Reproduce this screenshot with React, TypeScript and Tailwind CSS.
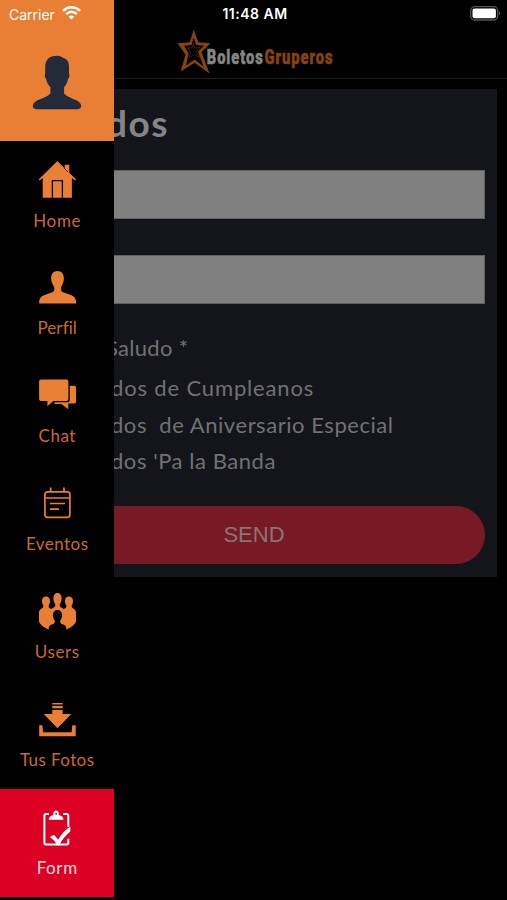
import type { ReactNode } from "react";

const HomeIcon = () => (
  <g>
    <path d="M19.3 0 26.7 7.2V3.7h4.6v8l6.8 6.8-1 1-3.2-2.4v19.6H4.7V17.1l-3 2.4-1-1z" />
    <path d="M14.4 36.7v-17h10v17" fill="none" stroke="#000" strokeWidth="1.3" />
    <path d="m26 7 4 4" fill="none" stroke="#000" strokeWidth=".7" />
  </g>
);

const PersonIcon = () => (
  <path d="M19.5 2c3.9 0 6.4 2.8 6.4 7.2 0 3.7-1.3 6.1-2.5 8.3-.9 1.7-.6 4.6 1 5.4l8.3 3.2c3.7 1.3 5.5 3.5 5.5 8.4H1.1c0-4.9 1.8-7.1 5.5-8.4l8.3-3.2c1.6-.8 1.9-3.7 1-5.4-1.2-2.2-2.8-4.6-2.8-8.3C13.1 4.8 15.6 2 19.5 2z" />
);

const ChatIcon = () => (
  <g>
    <path d="M3 2.5h25.5q1.9 0 1.9 1.9V22q0 1.9-1.9 1.9H15.3l-5.9 5.3v-5.3H3q-1.9 0-1.9-1.9V4.4Q1.1 2.5 3 2.5z" />
    <path d="M31.8 8.7h4.4q1.9 0 1.9 1.9v14q0 1.9-1.9 1.9h-5.9v5.8l-6.8-5.3h-7.7l1.8-1.7h11.8q2.4 0 2.4-2.6z" />
  </g>
);

const EventIcon = () => (
  <g fill="none" stroke="currentColor" strokeWidth="1.7">
    <rect x="6.9" y="6.8" width="25" height="25.5" rx="2.5" />
    <path d="M6.900 13h25M12.700 2.600v4.200M26 2.600v4.200M12 18.500h15M12 24.200h9" />
  </g>
);

const UsersIcon = () => (
  <g>
    <path d="M8 3.500c2.500 0 4 1.800 4 4.400 0 2.300-.8 3.200-1.400 5 0 1.900 1.200 2.300 3 3.200l1-1c2-.9 2.800-1.300 2.800-3.300-1.200-2-2-3.700-2-6.500C15.400 2 16.900 0 19.500 0s4.100 2 4.100 5.300c0 2.800-.8 4.500-2 6.500 0 2 .8 2.400 2.800 3.300l1 1c1.800-.9 3-1.300 3-3.200-.6-1.800-1.400-2.700-1.400-5 0-2.600 1.500-4.400 4-4.400s4 1.800 4 4.400c0 2.300-.8 3.200-1.400 5 0 2.800 4.400 2.600 4.400 6.600v9.300c-1.500 3.200-4.500 5.600-9.500 7.700H10.500C5.500 34.400 2.500 32 1 28.800v-9.300c0-4 4.400-3.800 4.400-6.600C4.800 11.100 4 10.200 4 7.900c0-2.600 1.500-4.400 4-4.400z" />
    <path d="M19.500 17c2.900 0 4.600 2 4.600 5 0 2.600-.9 4-1.900 5.700-.3 3 1.200 3.100 3.800 4 1.800.8 2.400 2.600 2.500 6.300h-18c.1-3.700.7-5.500 2.500-6.300 2.600-.9 4.100-1 3.800-4-1-1.700-1.900-3.100-1.900-5.700 0-3 1.700-5 4.600-5z" fill="#000" />
  </g>
);

const DownloadIcon = () => (
  <path d="M14.300 2h10.400v1.500H14.300zM14.300 5h10.400v2.300H14.300zM14.300 9h10.400v4.100h8.600L19.500 27.300 5.700 13.100h8.600zM1.200 24.300h3.200l.7 7h28.500l.7-7h3.400v11H1.200z" />
);

const FormIcon = () => (
  <g>
    <path d="M11 5H8Q6.400 5 6.400 6.600v27.200q0 1.600 1.600 1.600h20.700q1.600 0 1.600-1.600v-4M25 5h3.700q1.600 0 1.600 1.600V18" fill="none" stroke="currentColor" strokeWidth="2" />
    <path d="M10.800 10.800q0-4 4.300-4.500c0-6.500 6-6.500 6 0q4.300.5 4.300 4.500z" />
    <circle cx="18.100" cy="4.700" r="1" fill="#dc0022" />
    <path d="m12 28 4-2.300 4.200 5q4.600-8.700 12.100-13v4.800Q25.500 28 21 36.300h-1.800Q16.500 31 12 28z" />
  </g>
);

const items: { label: string; icon: ReactNode; track: string }[] = [
  { label: "Home", icon: <HomeIcon />, track: "tracking-[0.7px]" },
  { label: "Perfil", icon: <PersonIcon />, track: "tracking-[0.1px]" },
  { label: "Chat", icon: <ChatIcon />, track: "tracking-[0.5px]" },
  { label: "Eventos", icon: <EventIcon />, track: "tracking-[0.45px]" },
  { label: "Users", icon: <UsersIcon />, track: "tracking-[0.6px]" },
  { label: "Tus Fotos", icon: <DownloadIcon />, track: "tracking-[0.4px]" },
  { label: "Form", icon: <FormIcon />, track: "tracking-[0.6px]" },
];

function Drawer() {
  return (
    <nav className="absolute inset-y-0 left-0 flex w-[114.4px] flex-col bg-black">
      <div className="flex h-[141px] shrink-0 justify-center bg-[#e97e35] pt-[55px]">
        <svg className="h-[55px] w-[50px] text-[#242a39]" viewBox="0 0 50 55" fill="currentColor">
          <path d="M25 .7c3.300 0 4.900 1.400 7 2.600 4 1.300 5 4.600 5 9.200v6.200c1 1.300.2 4.300-1 5.500-.7 3.500-2 5.800-3.900 8v6.300c3 3.500 8.800 5 13.300 7.300 2.500 1.400 3.700 3.300 3.900 5.700-.6 1.800-2 2.800-4 2.800h-40.600c-2 0-3.400-1-4-2.800.2-2.400 1.400-4.300 3.900-5.700 4.500-2.300 10.800-3.800 13.800-7.300v-6.300c-2-2.200-3.500-4.500-4.200-8-1.200-1.200-2-4.200-1-5.500v-6.200C13.200 5 16.800.7 25 .7z" />
        </svg>
      </div>
      {items.map((item) => (
        <div
          key={item.label}
          className={
            "flex h-[107.95px] shrink-0 flex-col items-center pt-5 " +
            (item.label === "Form" ? "bg-[#dc0022] text-white" : "text-[#e97e35]")
          }
        >
          <svg className="ml-px h-[38px] w-[39px]" viewBox="0 0 39 38" fill="currentColor">
            {item.icon}
          </svg>
          <span className={"mt-[9.5px] text-[17px] leading-6 whitespace-nowrap opacity-85 " + item.track}>{item.label}</span>
        </div>
      ))}
    </nav>
  );
}

function StatusBar() {
  return (
    <div className="absolute inset-x-0 top-0 grid h-7 grid-cols-3 items-center pr-[6px] pl-[9px] font-[Inter,sans-serif] text-white">
      <div className="flex items-center gap-[7px]">
        <span className="text-[14px]">Carrier</span>
        <svg className="mb-[2px] h-[14px] w-[19px]" viewBox="0 0 19 14" fill="none" stroke="white" strokeWidth="2.5">
          <path d="M1 4.800c4.900-4.700 12.100-4.700 17 0M4.100 8.100c3.200-3 7.600-3 10.800 0" />
          <path d="m6.600 10.700 2.900 2.900 2.900-2.900q-2.900-2.300-5.800 0z" fill="white" stroke="none" />
        </svg>
      </div>
      <span className="-mt-px text-center text-[14px] font-semibold tracking-[0.5px] whitespace-nowrap">11:48 AM</span>
      <svg className="mb-px h-[15px] w-[31px] justify-self-end" viewBox="0 0 31 15">
        <rect x=".7" y=".7" width="27" height="13.3" rx="4" fill="none" stroke="#555" strokeWidth="1.3" />
        <rect x="2.5" y="2.5" width="23.4" height="9.7" rx="2" fill="#fff" />
        <path d="M29 5.200q2.400 2.200 0 4.400z" fill="#555" />
      </svg>
    </div>
  );
}

function Logo() {
  return (
    <svg className="ml-[177px] h-[46px] w-[160px]" viewBox="177 29 160 46">
      <path
        fillRule="evenodd"
        fill="#85450a"
        d="M193.700 29.500 198.200 42.300 210.500 43.200 201.500 52 209.500 73.500 194.500 62.700 180.700 71.500 185.500 54.500 177.500 43.200 189.800 42.300zM193.700 37.500 191.500 45.100 184 45.700 188.700 53.500 186 65.500 194.500 59.500 203.500 66.500 198 51.500 204 45.700 196.200 45.100z"
      />
      <path d="m193.500 43.500 1.200 4.500 5-.5-3.500 4 3.500 6-5.700-3-5 3 1.700-5.500-3-4 4.500-.2z" fill="none" stroke="#85450a" strokeOpacity=".6" strokeWidth=".8" />
      <g fontFamily="Roboto, sans-serif" fontWeight="900" fontSize="20" letterSpacing="1.3" strokeWidth=".5">
        <text transform="translate(206.700 64) scale(.735 1)" fill="#858585" stroke="#858585">Boletos</text>
        <text transform="translate(264.500 64) scale(.735 1)" fill="#85450a" stroke="#85450a">Gruperos</text>
      </g>
    </svg>
  );
}

export default function App() {
  return (
    <div className="relative h-[900px] w-[507px] overflow-hidden bg-black font-[Lato,sans-serif]">
      <header className="flex h-[79px] items-end border-b border-[#1b1b1b] pb-[3px]">
        <Logo />
      </header>
      <main className="mt-[9.5px] mr-[10px] h-[488px] bg-[#14151a] pr-3 text-[22px] leading-[37px] text-[#717174]">
        <h1 className="h-[81.5px] pt-[10.5px] pl-[106px] text-[37px] leading-[48px] font-bold tracking-[1.5px] text-[#858587]">dos</h1>
        <div className="ml-3 h-[49px] border border-[#606060] bg-[#808080]" />
        <div className="mt-[36.4px] ml-3 h-[49px] border border-[#606060] bg-[#808080]" />
        <p className="mt-[24.5px] pl-[106px] tracking-[0.3px] whitespace-pre">Saludo *</p>
        <div className="mt-[3.6px] pl-[111px] tracking-[0.55px] whitespace-pre">
          <p className="h-[36.5px] tracking-[0.85px]">dos de Cumpleanos</p>
          <p className="h-[36.5px]">dos  de Aniversario Especial</p>
          <p className="h-[36.5px]">dos 'Pa la Banda</p>
        </div>
        <button className="mt-[26.6px] ml-3 flex h-[58px] w-[473px] items-center justify-center rounded-full bg-[#771a26] pl-[11px] font-['Liberation_Sans',sans-serif] text-[22px] text-[#88776f]">
          SEND
        </button>
      </main>
      <Drawer />
      <StatusBar />
    </div>
  );
}
